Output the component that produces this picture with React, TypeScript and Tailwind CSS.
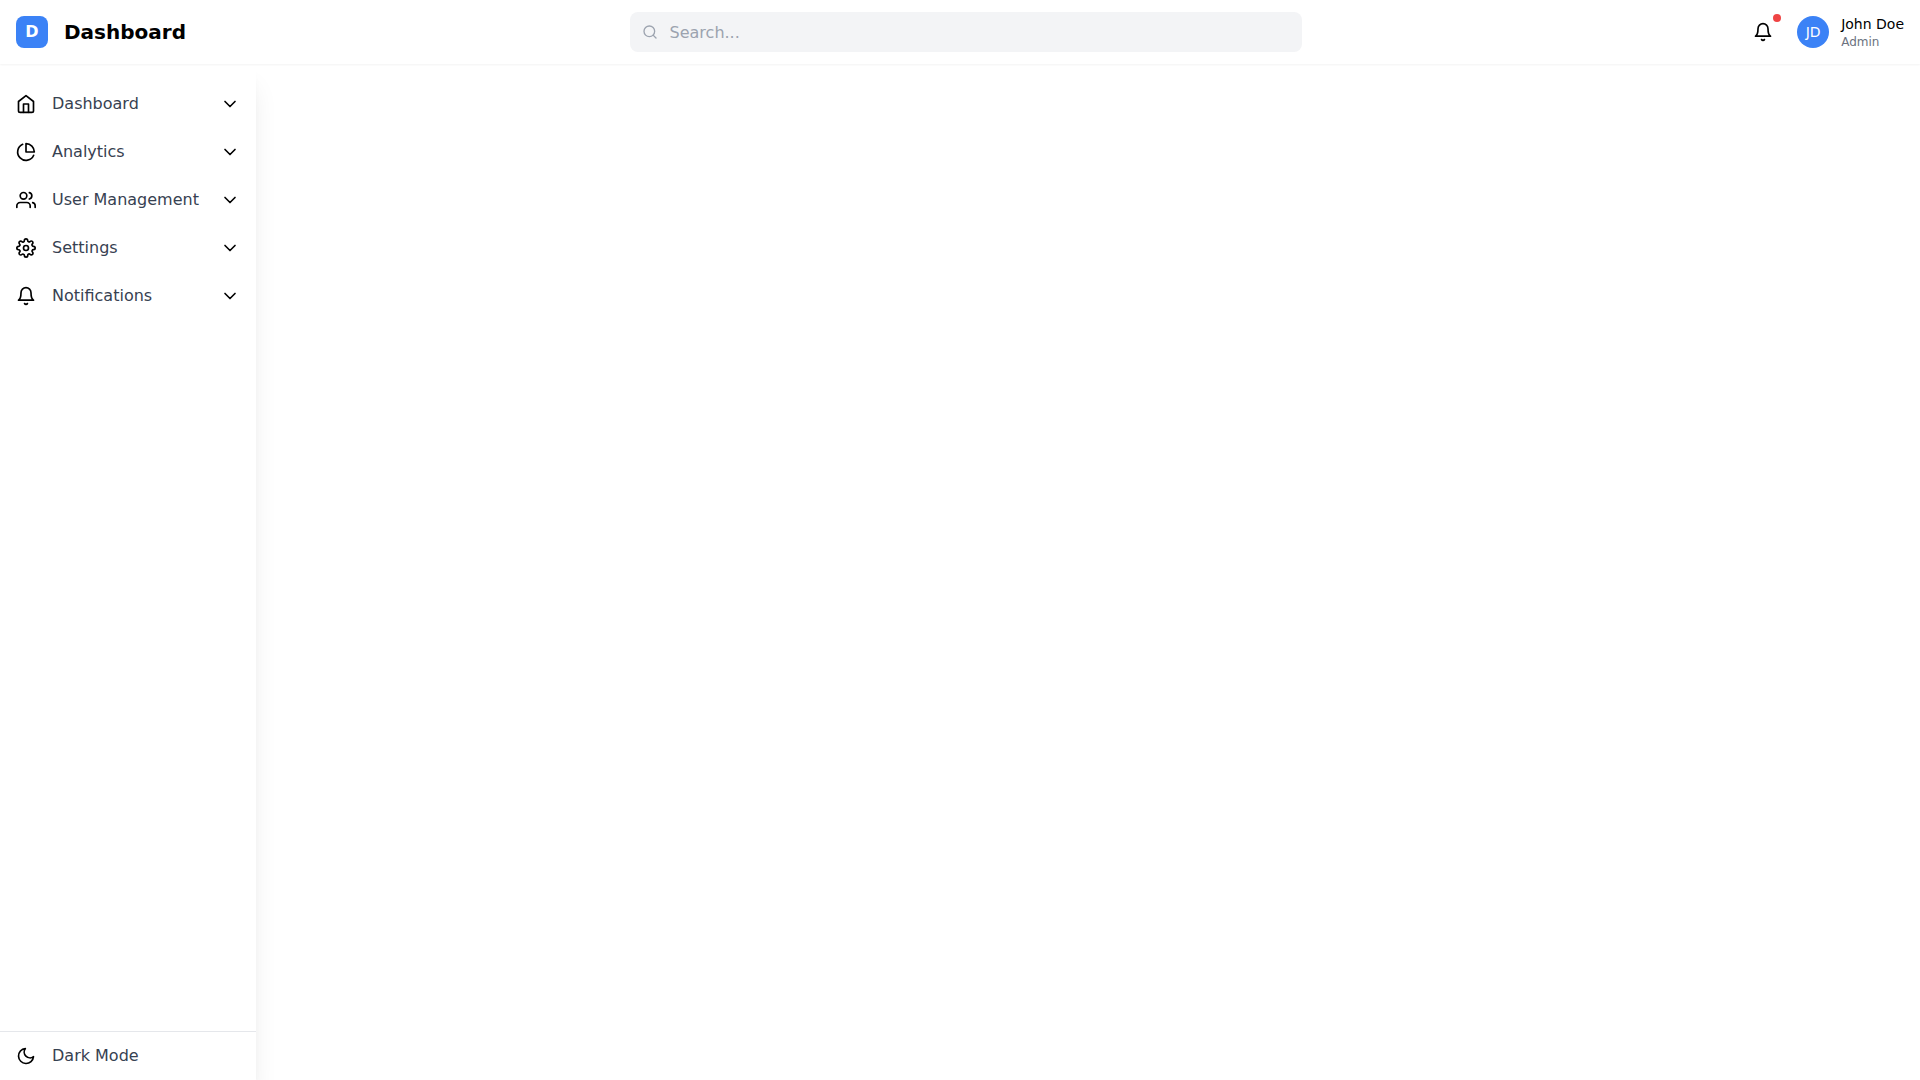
import { useState } from 'react';
import {
  FiBell,
  FiChevronDown,
  FiHome,
  FiMoon,
  FiPieChart,
  FiSearch,
  FiSettings,
  FiUsers,
} from 'react-icons/fi';

const menuItems = [
  { label: 'Dashboard', icon: FiHome },
  { label: 'Analytics', icon: FiPieChart },
  { label: 'User Management', icon: FiUsers },
  { label: 'Settings', icon: FiSettings },
  { label: 'Notifications', icon: FiBell },
];

function Header() {
  return (
    <header className="relative z-20 h-16 px-4 flex items-center justify-between bg-white shadow-[0_1px_2px_0_rgb(0_0_0/0.05)]">
      <div className="flex items-center gap-4">
        <div className="w-8 h-8 rounded-lg bg-[#3b82f6] text-white font-bold flex items-center justify-center">
          D
        </div>
        <h1 className="text-xl font-bold">Dashboard</h1>
      </div>

      <div className="relative w-full max-w-2xl">
        <FiSearch className="absolute left-3 top-3 w-4 h-4 text-[#9ca3af]" />
        <input
          type="text"
          aria-label="Search"
          placeholder="Search..."
          className="block w-full h-10 pl-10 pr-4 rounded-lg bg-[#f3f4f6] placeholder:text-[#9ca3af] outline-none"
        />
      </div>

      <div className="flex items-center gap-4">
        <button type="button" aria-label="Notifications" className="relative p-2 rounded-full">
          <FiBell className="w-5 h-5" />
          <span className="absolute top-0 right-0 w-2 h-2 rounded-full bg-[#ef4444]" />
        </button>
        <div className="flex items-center gap-3">
          <div className="w-8 h-8 rounded-full bg-[#3b82f6] text-white text-sm flex items-center justify-center">
            JD
          </div>
          <div>
            <p className="text-sm">John Doe</p>
            <p className="text-xs text-[#6b7280]">Admin</p>
          </div>
        </div>
      </div>
    </header>
  );
}

function Sidebar() {
  const [open, setOpen] = useState('');

  return (
    <aside className="w-64 shrink-0 flex flex-col bg-white shadow-xl">
      <nav className="flex-1 py-4">
        {menuItems.map(({ label, icon: Icon }) => (
          <button
            key={label}
            type="button"
            aria-expanded={open === label}
            onClick={() => setOpen(open === label ? '' : label)}
            className="w-full px-4 py-3 flex items-center gap-4"
          >
            <Icon className="w-5 h-5" />
            <span className="flex-1 text-left text-[#374151]">{label}</span>
            <FiChevronDown className="w-5 h-5" />
          </button>
        ))}
      </nav>
      <div className="border-t border-[#e5e7eb]">
        <button type="button" className="w-full px-4 py-3 flex items-center gap-4">
          <FiMoon className="w-5 h-5" />
          <span className="text-[#374151]">Dark Mode</span>
        </button>
      </div>
    </aside>
  );
}

export default function App() {
  return (
    <div className="h-screen flex flex-col overflow-hidden bg-white text-black font-['DejaVu_Sans',sans-serif]">
      <Header />
      <div className="flex-1 flex">
        <Sidebar />
        <main className="flex-1" />
      </div>
    </div>
  );
}
